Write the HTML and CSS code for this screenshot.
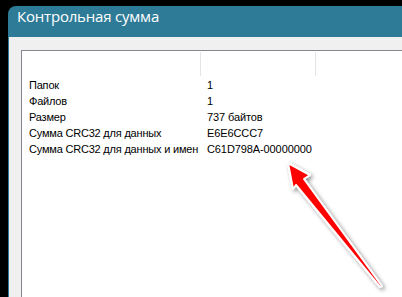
FILE: index.html
```html
<!DOCTYPE html>
<html lang="ru">
<head>
    <meta charset="UTF-8">
    <title>Контрольная сумма</title>
    <link rel="stylesheet" href="styles.css">
</head>
<body>
    <div class="window">
        <div class="title">Контрольная сумма</div>
        <div class="client">
            <div class="list">
                <div class="list-head">
                    <span class="col col-name"></span>
                    <span class="col col-value"></span>
                    <span class="col col-rest"></span>
                </div>
                <div class="row"><span class="name">Папок</span><span class="value">1</span></div>
                <div class="row"><span class="name">Файлов</span><span class="value">1</span></div>
                <div class="row"><span class="name">Размер</span><span class="value">737 байтов</span></div>
                <div class="row"><span class="name">Сумма CRC32 для данных</span><span class="value">E6E6CCC7</span></div>
                <div class="row"><span class="name">Сумма CRC32 для данных и имен</span><span class="value">C61D798A-00000000</span></div>
            </div>
        </div>
    </div>

    <!-- стрелка поверх окна -->
    <svg class="arrow" width="402" height="297" viewBox="0 0 402 297">
        <defs>
            <filter id="shadow" x="-20%" y="-20%" width="140%" height="140%">
                <feDropShadow dx="2" dy="2" stdDeviation="2" flood-color="#000" flood-opacity="0.45" />
            </filter>
        </defs>
        <path d="M288 163 L310 175 L304 179 L382 286 L380 287 L296 185 L293 189 Z"
              fill="#ff0000" stroke="#ffffff" stroke-width="2" stroke-linejoin="round" filter="url(#shadow)" />
    </svg>
</body>
</html>
```

FILE: styles.css
```css
html,
body {
    margin: 0;
    height: 100%;
    overflow: hidden;
}

body {
    background: #000;
    position: relative;
}

.window {
    margin: 6px 0 0 8px;
    height: 300px;
    background: #2e7b97;
    border-radius: 8px 0 0 0;
    display: flex;
    flex-direction: column;
}

.title {
    height: 31px;
    line-height: 30px;
    padding-left: 9px;
    color: #fff;
    font: 15px "Open Sans", "Noto Sans", sans-serif;
    letter-spacing: -0.2px;
}

.client {
    flex: 1;
    margin-left: 1px;
    background: #f0f0f0;
    padding: 13px 0 0 12px;
}

.list {
    height: 100%;
    background: #fff;
    border-top: 1px solid #828790;
    border-left: 1px solid #828790;
    font: 11px "Liberation Sans", "DejaVu Sans", sans-serif;
    color: #000;
}

.list-head {
    display: flex;
    height: 26px;
    padding-top: 1px;
    box-sizing: border-box;
}

.col {
    border-right: 1px solid #e5e5e5;
    height: 24px;
}

.col-name {
    width: 178px;
}

.col-value {
    width: 114px;
}

.col-rest {
    border-right: none;
}

.row {
    display: flex;
    height: 16px;
    line-height: 16px;
}

.name {
    box-sizing: border-box;
    width: 178px;
    padding-left: 7px;
    letter-spacing: -0.2px;
    white-space: nowrap;
    overflow: hidden;
}

.value {
    padding-left: 7px;
    letter-spacing: -0.1px;
}

.arrow {
    position: absolute;
    left: 0;
    top: 0;
}
```
